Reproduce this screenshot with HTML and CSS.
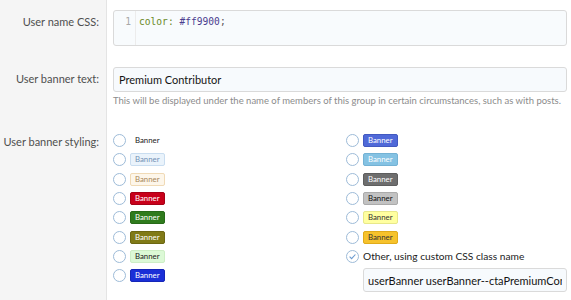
FILE: index.html
```html
<!DOCTYPE html>
<html lang="en">
<head>
  <meta charset="UTF-8" />
  <title>User group styling</title>
  <link rel="stylesheet" href="styles.css">
</head>
<body>

<div class="form">

  <!-- USER NAME CSS -->
  <div class="form-row">
    <div class="label">User name CSS:</div>
    <div class="field">
      <div class="editor">
        <div class="gutter">1</div>
        <div class="code"><span class="prop">color:</span> <span class="val">#ff9900</span>;</div>
      </div>
    </div>
  </div>

  <!-- USER BANNER TEXT -->
  <div class="form-row">
    <div class="label">User banner text:</div>
    <div class="field">
      <input class="input" type="text" value="Premium Contributor" />
      <div class="hint">This will be displayed under the name of members of this group in certain circumstances, such as with posts.</div>
    </div>
  </div>

  <!-- USER BANNER STYLING -->
  <div class="form-row">
    <div class="label label-styling">User banner styling:</div>
    <div class="field styling">
      <div class="choices">
        <div class="choice"><span class="radio"></span><span class="banner b-plain">Banner</span></div>
        <div class="choice"><span class="radio"></span><span class="banner b-lightblue">Banner</span></div>
        <div class="choice"><span class="radio"></span><span class="banner b-cream">Banner</span></div>
        <div class="choice"><span class="radio"></span><span class="banner b-red">Banner</span></div>
        <div class="choice"><span class="radio"></span><span class="banner b-green">Banner</span></div>
        <div class="choice"><span class="radio"></span><span class="banner b-olive">Banner</span></div>
        <div class="choice"><span class="radio"></span><span class="banner b-lightgreen">Banner</span></div>
        <div class="choice"><span class="radio"></span><span class="banner b-blue">Banner</span></div>
      </div>
      <div class="choices">
        <div class="choice"><span class="radio"></span><span class="banner b-royal">Banner</span></div>
        <div class="choice"><span class="radio"></span><span class="banner b-sky">Banner</span></div>
        <div class="choice"><span class="radio"></span><span class="banner b-gray">Banner</span></div>
        <div class="choice"><span class="radio"></span><span class="banner b-silver">Banner</span></div>
        <div class="choice"><span class="radio"></span><span class="banner b-yellow">Banner</span></div>
        <div class="choice"><span class="radio"></span><span class="banner b-gold">Banner</span></div>
        <div class="choice">
          <span class="radio checked">
            <svg width="9" height="9" viewBox="0 0 9 9"><path d="M1.6 4.7 L3.6 6.6 L7.4 2.5" fill="none" stroke="#6b9bd0" stroke-width="1.1"/></svg>
          </span>
          <span class="other">Other, using custom CSS class name</span>
        </div>
        <input class="input custom" type="text" value="userBanner userBanner--ctaPremiumContributor" />
      </div>
    </div>
  </div>

</div>

</body>
</html>
```

FILE: styles.css
```css
body {
  margin: 0;
  font-family: Lato, "Noto Sans", Arial, sans-serif;
  font-size: 11px;
  color: #141414;
  background: #fff;
}
.form {
  width: 571px;
  height: 300px;
  overflow: hidden;
}
.form-row {
  display: flex;
}
.label {
  width: 99px;
  flex-shrink: 0;
  padding: 15px 7px 0 0;
  text-align: right;
  color: #4f4f4f;
  background: #f5f5f5;
  border-right: 1px solid #e4e4e4;
  white-space: nowrap;
}
.label-styling {
  padding-top: 18px;
}
.field {
  flex: 1;
  min-width: 0;
  padding: 10px 4px 11px 6px;
}
.editor {
  display: flex;
  height: 34px;
  border: 1px solid #dadada;
  border-radius: 3px;
  background: #f8fbfd;
  font-family: "DejaVu Sans Mono", monospace;
  font-size: 9.6px;
}
.gutter {
  width: 17px;
  padding: 5px 4px 0 0;
  text-align: right;
  color: #a8a8a8;
  border-right: 1px solid #ececec;
}
.code {
  padding: 5px 0 0 3px;
  color: #555;
}
.prop {
  color: #6a8a1f;
}
.val {
  color: #4b3d8f;
}
.input {
  display: block;
  box-sizing: border-box;
  width: 100%;
  min-width: 0;
  height: 25px;
  margin: 0;
  padding: 0 5px;
  border: 1px solid #dadada;
  border-radius: 3px;
  background: #f7fafd;
  color: #141414;
  font-family: inherit;
  font-size: 11px;
  outline: none;
}
.hint {
  margin-top: 3px;
  font-size: 9.5px;
  color: #8c8c8c;
  white-space: nowrap;
}
.styling {
  display: grid;
  grid-template-columns: 233px minmax(0, 1fr);
  padding-top: 14px;
  padding-bottom: 20px;
}
.choices {
  min-width: 0;
}
.choice {
  display: flex;
  align-items: center;
  height: 19.3px;
}
.radio {
  width: 11px;
  height: 11px;
  border: 1px solid #9dbbd8;
  border-radius: 50%;
  margin-right: 4px;
  display: flex;
  align-items: center;
  justify-content: center;
  background: #fff;
}
.banner {
  font-size: 7.8px;
  padding: 0 4px;
  height: 11px;
  line-height: 11px;
  border: 1px solid transparent;
  border-radius: 2px;
}
.b-plain { color: #222; }
.b-lightblue { background: #eaf3fb; border-color: #c9ddf0; color: #7391b5; }
.b-cream { background: #fdf6ea; border-color: #f0dab6; color: #a8875a; }
.b-red { background: #c8001a; border-color: #a50016; color: #fff; }
.b-green { background: #2f7b1d; border-color: #276a18; color: #fff; }
.b-olive { background: #807a17; border-color: #6c6712; color: #fff; }
.b-lightgreen { background: #dcf9d6; border-color: #cdeec5; color: #222; }
.b-blue { background: #1a2fd7; border-color: #1526b8; color: #fff; }
.b-royal { background: #4f69d8; border-color: #4259c0; color: #fff; }
.b-sky { background: #84c2e3; border-color: #74b2d4; color: #fff; }
.b-gray { background: #6e6e6e; border-color: #5e5e5e; color: #fff; }
.b-silver { background: #c2c2c2; border-color: #ababab; color: #111; }
.b-yellow { background: #ffffa0; border-color: #e8e88a; color: #333; }
.b-gold { background: #f6c22c; border-color: #e0ab1a; color: #333; }
.other {
  font-size: 10.2px;
  color: #222;
}
.custom {
  width: calc(100% - 17px);
  height: 24px;
  margin: 2px 0 0 17px;
  padding: 0 4px;
}
```
